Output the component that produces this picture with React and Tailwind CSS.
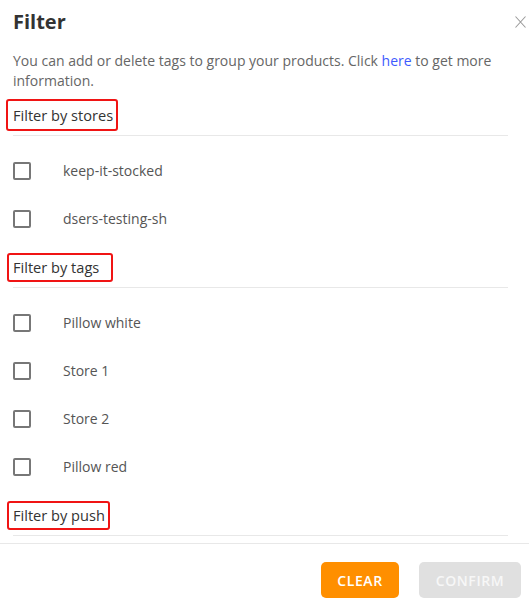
import React from "react";

const font = { fontFamily: '"Open Sans", "Liberation Sans", sans-serif' };

function Heading({ children, box }) {
  return (
    <div className="relative mt-[4px] h-[41px] flex items-center border-b border-[#e8e8e8] mr-[21px]">
      <span className="text-[14.6px] leading-[20px] text-[#333]">{children}</span>
      <div className={`absolute border-2 border-[#f01414] rounded-[3px] ${box}`} />
    </div>
  );
}

function Row({ label }) {
  return (
    <div className="h-[48px] flex items-center">
      <div className="w-[18px] h-[18px] border-2 border-[#777] rounded-[2px] shrink-0" />
      <span className="ml-[32px] text-[14px] leading-[20px] text-[#555]">{label}</span>
    </div>
  );
}

export default function App() {
  return (
    <div className="w-[529px] h-[610px] bg-white flex flex-col" style={font}>
      <div className="h-[44px] flex items-center justify-between pl-[13px] pr-[3px] shrink-0">
        <span className="text-[20px] font-bold text-[#333] leading-[28px]">Filter</span>
        <svg width="11" height="12" viewBox="0 0 11 12" className="mt-[-1px]">
          <path d="M0.5 0.5 L10.5 11.5 M10.5 0.5 L0.5 11.5" stroke="#9a9a9a" strokeWidth="1.1" fill="none" />
        </svg>
      </div>
      <div className="h-[499px] overflow-hidden pl-[13px] shrink-0">
        <p className="pt-[7px] text-[14px] leading-[20px] text-[#666] pr-[21px]">
          You can add or delete tags to group your products. Click <span className="text-[#3d5afe]">here</span> to get more information.
        </p>
        <Heading box="left-[-7px] top-[4px] w-[112px] h-[32px]">Filter by stores</Heading>
        <div className="pt-[11px]">
          <Row label="keep-it-stocked" />
          <Row label="dsers-testing-sh" />
        </div>
        <Heading box="left-[-6px] top-[6px] w-[106px] h-[29px]">Filter by tags</Heading>
        <div className="pt-[11px]">
          <Row label="Pillow white" />
          <Row label="Store 1" />
          <Row label="Store 2" />
          <Row label="Pillow red" />
        </div>
        <Heading box="left-[-6px] top-[6px] w-[103px] h-[29px]">Filter by push</Heading>
      </div>
      <div className="border-t border-[#e8e8e8] pt-[18px] flex justify-end gap-[20px] pr-[8px]">
        <button className="w-[78px] h-[36px] rounded-[5px] bg-[#ff8f00] text-white text-[14px] font-semibold tracking-[0.6px]">
          CLEAR
        </button>
        <button className="w-[102px] h-[36px] rounded-[5px] bg-[#e0e0e0] text-[#f7f7f7] text-[14px] font-semibold tracking-[0.6px]">
          CONFIRM
        </button>
      </div>
    </div>
  );
}
